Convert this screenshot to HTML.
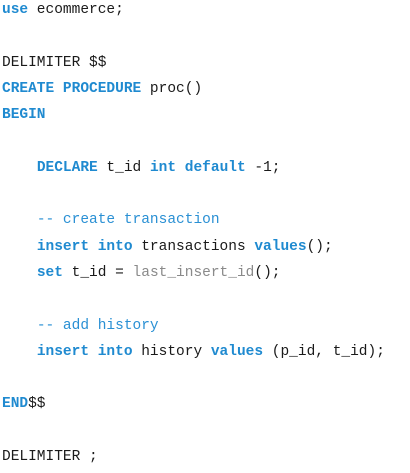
<!DOCTYPE html>
<html><head><meta charset="utf-8"><style>
html,body{margin:0;padding:0;background:#fff;width:410px;height:473px;overflow:hidden}
pre{margin:0;position:absolute;left:2px;top:-3px;font-family:"Liberation Mono","DejaVu Sans Mono",monospace;font-size:14.5px;line-height:26.3px;color:#1a1a1a;}
.k{color:#1f8ad0;font-weight:bold}
.c{color:#2a90d4}
.f{color:#8a8a8a}
.t{font-weight:bold}
</style></head><body><pre><span class="k">use</span> ecommerce;

DELIMITER $$
<span class="k">CREATE PROCEDURE</span> proc()
<span class="k">BEGIN</span>

    <span class="k">DECLARE</span> t_id <span class="k">int default</span> -1;

    <span class="c">-- create transaction</span>
    <span class="k">insert into</span> transactions <span class="k">values</span>();
    <span class="k">set</span> t_id = <span class="f">last_insert_id</span>();

    <span class="c">-- add history</span>
    <span class="k">insert into</span> history <span class="k">values</span> (p_id, t_id);

<span class="k">END</span>$$

DELIMITER ;</pre></body></html>
